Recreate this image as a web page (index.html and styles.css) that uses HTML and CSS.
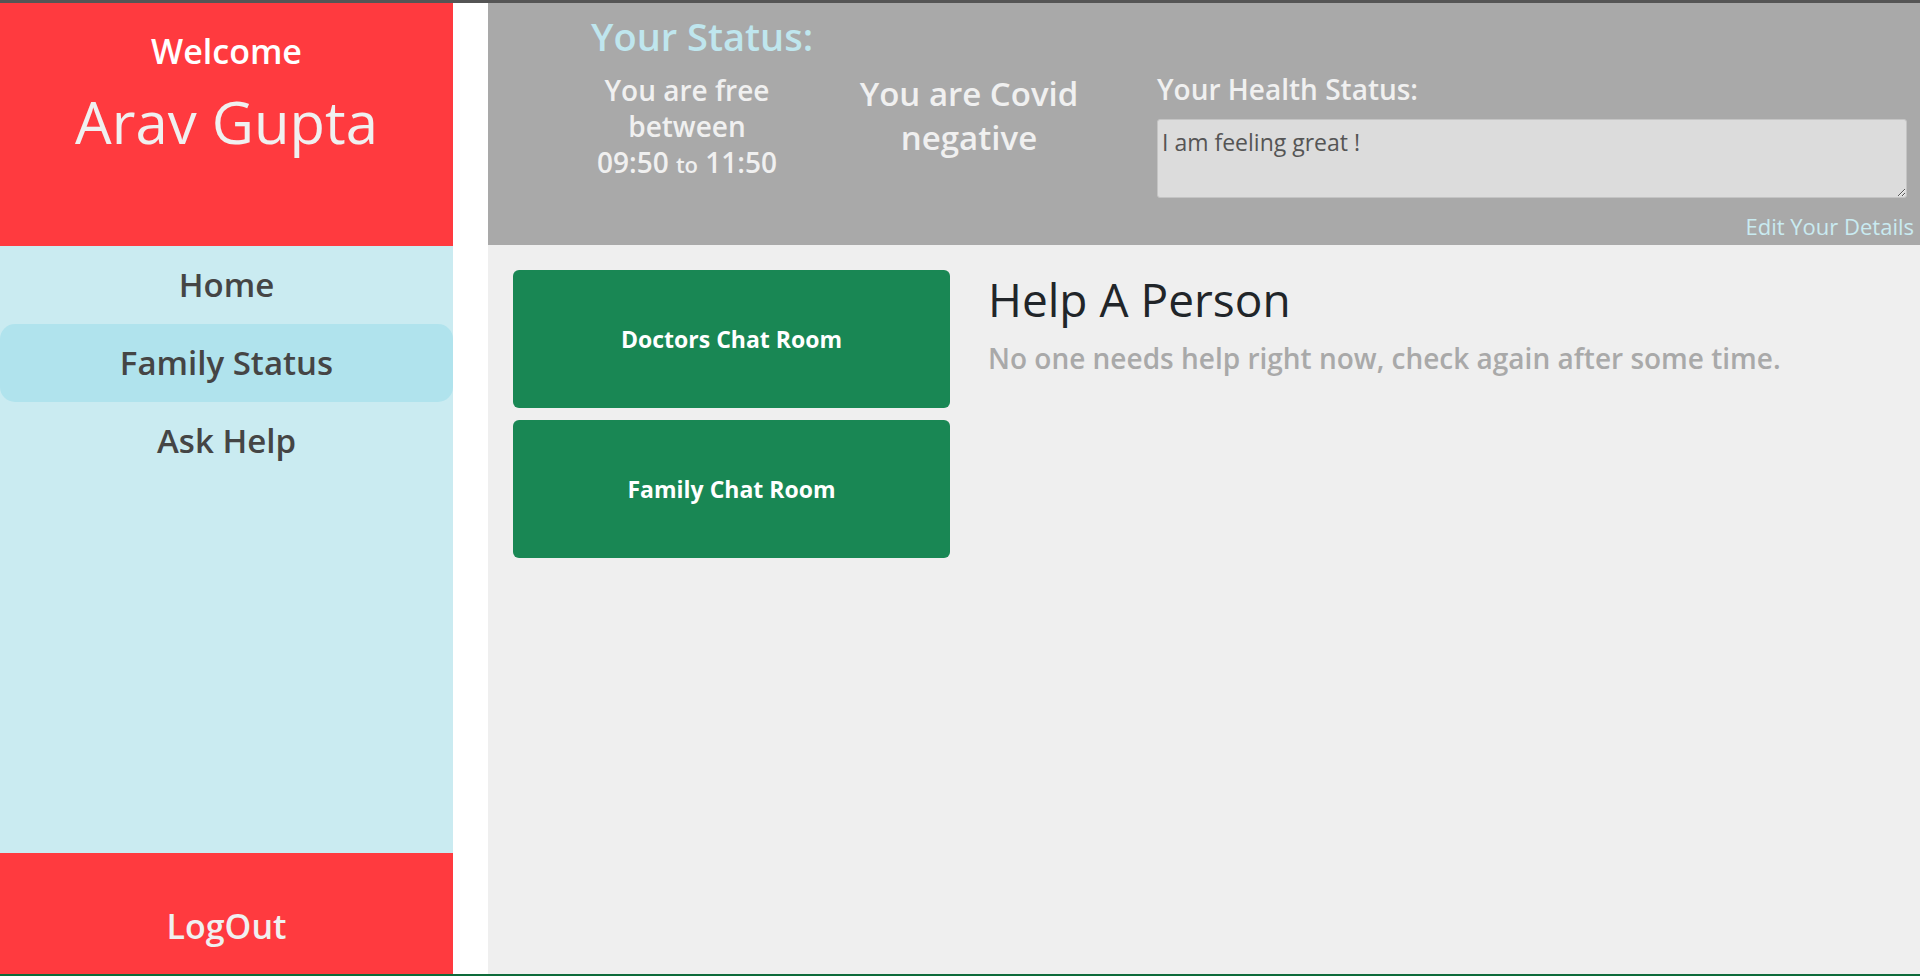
FILE: index.html
```html
<!DOCTYPE html>
<html lang="en">
<head>
    <meta charset="UTF-8">
    <meta name="viewport" content="width=device-width, initial-scale=1.0">
    <title>Family Status</title>
    <link rel="stylesheet" href="styles.css">
</head>
<body>
    <div class="sidebar">
        <div class="welcome">
            <div class="welcome-small">Welcome</div>
            <div class="welcome-name">Arav Gupta</div>
        </div>
        <div class="nav">
            <a href="#" class="nav-item">Home</a>
            <a href="#" class="nav-item active">Family Status</a>
            <a href="#" class="nav-item">Ask Help</a>
        </div>
        <a href="#" class="logout">LogOut</a>
    </div>

    <div class="main">
        <div class="status-bar">
            <div class="status-title">Your Status:</div>
            <div class="status-row">
                <div class="status-free">
                    <div>You are free</div>
                    <div>between</div>
                    <div>09:50 <small>to</small> 11:50</div>
                </div>
                <div class="status-covid">You are Covid negative</div>
                <div class="status-health">
                    <div class="health-label">Your Health Status:</div>
                    <textarea class="health-input">I am feeling great !</textarea>
                </div>
            </div>
            <a href="#" class="edit-link">Edit Your Details</a>
        </div>

        <div class="content">
            <div class="rooms">
                <button class="room-button">Doctors Chat Room</button>
                <button class="room-button">Family Chat Room</button>
            </div>
            <div class="help">
                <h2 class="help-title">Help A Person</h2>
                <div class="help-empty">No one needs help right now, check again after some time.</div>
            </div>
        </div>
    </div>
</body>
</html>
```

FILE: styles.css
```css
* {
    margin: 0;
    padding: 0;
    box-sizing: border-box;
    font-family: "Open Sans", "Noto Sans", sans-serif;
}

body {
    background-color: white;
    height: 976px;
    border-top: 3px solid #555;
    border-bottom: 2px solid #0d6b3a;
    display: flex;
    overflow: hidden;
}

a {
    text-decoration: none;
}

.sidebar {
    width: 453px;
    display: flex;
    flex-direction: column;
    background-color: #caebf1;
}

.welcome {
    background-color: #ff3a3f;
    height: 243px;
    text-align: center;
    padding-top: 28px;
}

.welcome-small {
    color: white;
    font-size: 34px;
    font-weight: 600;
    line-height: 1.2;
}

.welcome-name {
    color: #f0f0f0;
    font-size: 58px;
    line-height: 1.2;
    margin-top: 15px;
}

.nav {
    flex: 1;
    display: flex;
    flex-direction: column;
}

.nav-item {
    height: 78px;
    line-height: 78px;
    text-align: center;
    color: #454545;
    font-size: 33px;
    font-weight: 600;
    border-radius: 15px;
}

.nav-item.active {
    background-color: #b0e3ed;
}

.logout {
    background-color: #ff3a3f;
    color: #f0f0f0;
    height: 121px;
    text-align: center;
    font-size: 34px;
    font-weight: 600;
    line-height: 42px;
    padding-top: 52px;
}

.main {
    flex: 1;
    margin-left: 35px;
    background-color: #efefef;
    display: flex;
    flex-direction: column;
}

.status-bar {
    background-color: #a9a9a9;
    height: 242px;
    display: flex;
    flex-direction: column;
    padding-top: 9px;
}

.status-title {
    color: #bfe6ee;
    font-size: 38px;
    font-weight: 600;
    line-height: 48px;
    padding-left: 103px;
}

.status-row {
    display: grid;
    grid-template-columns: 262px 262px 1fr;
    column-gap: 20px;
    padding-left: 68px;
    padding-right: 13px;
    margin-top: 12px;
    height: 126px;
}

.status-free {
    color: #f0f0f0;
    font-size: 28px;
    font-weight: 600;
    line-height: 36px;
    text-align: center;
}

.status-free small {
    font-size: 22px;
    line-height: 1;
}

.status-covid {
    color: #f0f0f0;
    font-size: 33px;
    font-weight: 600;
    line-height: 44px;
    text-align: center;
    padding: 0 10px;
}

.status-health {
    margin-left: 37px;
    display: flex;
    flex-direction: column;
}

.health-label {
    color: #f0f0f0;
    font-size: 28px;
    font-weight: 600;
    line-height: 35px;
}

.health-input {
    margin-top: 12px;
    height: 79px;
    background-color: #dcdcdc;
    border: 1px solid #c4c4c4;
    border-radius: 3px;
    color: #555;
    font-size: 23px;
    padding: 6px 4px 2px;
    resize: vertical;
}

.edit-link {
    color: #c9ebf1;
    font-size: 22px;
    line-height: 30px;
    text-align: right;
    padding-right: 6px;
    margin-top: 13px;
}

.content {
    display: flex;
    gap: 38px;
    padding: 25px 25px;
}

.rooms {
    display: flex;
    flex-direction: column;
    gap: 12px;
}

.room-button {
    width: 437px;
    height: 138px;
    background-color: #198754;
    color: white;
    border: none;
    border-radius: 6px;
    font-size: 23px;
    font-weight: 700;
    cursor: pointer;
}

.help-title {
    color: #212529;
    font-size: 46px;
    font-weight: 500;
    line-height: 1.2;
    margin-top: 2px;
}

.help-empty {
    color: #a9a9a9;
    font-size: 28px;
    font-weight: 600;
    line-height: 1.5;
    margin-top: 10px;
}
```
